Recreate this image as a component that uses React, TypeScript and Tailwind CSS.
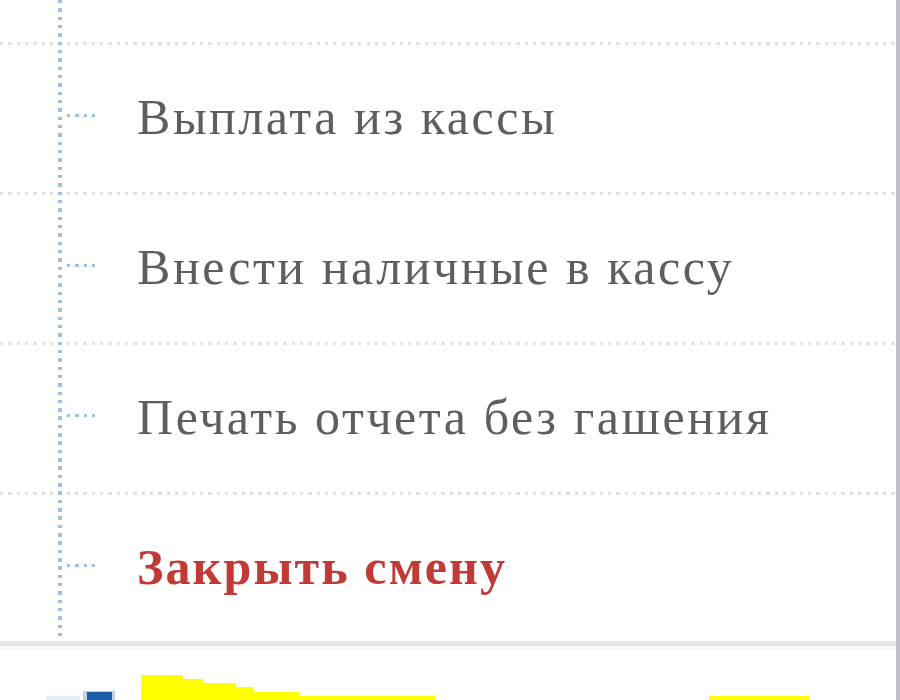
import React from 'react';

const ITEMS = [
  { label: 'Выплата из кассы', danger: false, sepRow: 'row-start-2', itemRow: 'row-start-3' },
  { label: 'Внести наличные в кассу', danger: false, sepRow: 'row-start-4', itemRow: 'row-start-5' },
  { label: 'Печать отчета без гашения', danger: false, sepRow: 'row-start-6', itemRow: 'row-start-7' },
  { label: 'Закрыть смену', danger: true, sepRow: 'row-start-8', itemRow: 'row-start-9' },
];

// gray dotted separator across the whole tree
const Separator: React.FC<{ row: string }> = ({ row }) => (
  <div
    className={`${row} col-start-1 col-end-4 h-[3px] bg-[repeating-linear-gradient(to_right,#e2e2e2_0_3.3px,transparent_3.3px_8.33px)]`}
  />
);

const TreeRow: React.FC<{ label: string; danger: boolean; row: string }> = ({ label, danger, row }) => (
  <div className={`${row} col-start-3 flex items-start`}>
    {/* branch connector */}
    <div className="mt-[69px] ml-[5px] w-[29px] h-[3px] bg-[repeating-linear-gradient(to_right,#9fc0dd_0_3.3px,transparent_3.3px_8.33px)]" />
    <span
      className={`ml-[41px] mt-[47px] leading-none whitespace-nowrap text-[50px] font-['Liberation_Serif',serif] ${
        danger ? 'text-[#c23a35] font-bold tracking-[2.1px]' : 'text-[#5e5e5e] tracking-[2.55px]'
      }`}
    >
      {label}
    </span>
  </div>
);

export default function App() {
  return (
    <div className="flex w-[900px] h-[700px] overflow-hidden bg-white">
      <div className="flex flex-col w-[896px]">
        {/* menu tree */}
        <div className="grid grid-cols-[58px_4px_1fr] grid-rows-[42px_3px_147px_3px_147px_3px_147px_3px_146px]">
          {ITEMS.map((item) => (
            <React.Fragment key={item.label}>
              <Separator row={item.sepRow} />
              <TreeRow label={item.label} danger={item.danger} row={item.itemRow} />
            </React.Fragment>
          ))}
          {/* vertical guide line of the tree */}
          <div className="col-start-2 row-start-1 row-end-10 bg-[repeating-linear-gradient(to_bottom,#9fc0dd_0_3.4px,transparent_3.4px_8.33px)]" />
        </div>

        {/* footer divider */}
        <div className="h-[5px] bg-[#e6e6e6]" />
        <div className="h-[4px] bg-[#f9f9f9]" />

        {/* next panel, cut off by the window */}
        <div className="flex items-end h-[50px] pl-[46px]">
          <div className="w-[34px] h-[4px] bg-[#e4edf7]" />
          <div className="ml-[3px] w-[32px] h-[9px] bg-[#bdd1e8] flex justify-center items-end">
            <div className="w-[25px] h-[8px] bg-[#1f5fa9]" />
          </div>
          <div className="ml-[26px] flex items-end">
            <div className="w-[42px] h-[25px] bg-[#ffff00]" />
            <div className="w-[20px] h-[21px] bg-[#ffff00]" />
            <div className="w-[33px] h-[17px] bg-[#ffff00]" />
            <div className="w-[17px] h-[13px] bg-[#ffff00]" />
            <div className="w-[46px] h-[8px] bg-[#ffff00]" />
            <div className="w-[136px] h-[4px] bg-[#ffff00]" />
          </div>
          <div className="ml-[274px] w-[100px] h-[4px] bg-[#ffff00]" />
        </div>
      </div>
      {/* scrollbar edge */}
      <div className="w-[4px] bg-[#c1c0c8]" />
    </div>
  );
}
